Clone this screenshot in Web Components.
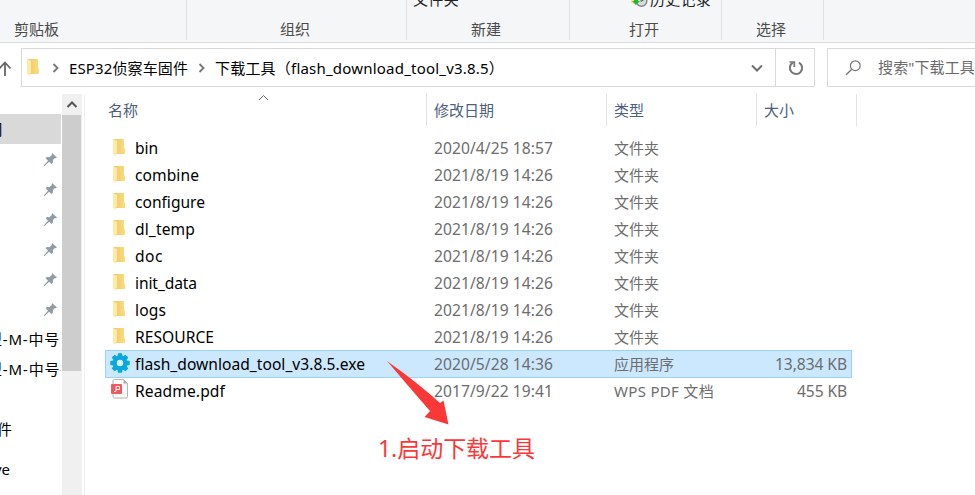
<!DOCTYPE html>
<html lang="zh-CN">
<head>
<meta charset="utf-8">
<title>下载工具</title>
<style>
html,body{margin:0;height:100%;overflow:hidden;background:#fff}
body{font-family:"Noto Sans","Noto Sans CJK SC",sans-serif;font-size:15px}
</style>
</head>
<body>
<explorer-window></explorer-window>
<script>
const el=(name,html,init)=>customElements.define(name,class extends HTMLElement{
  connectedCallback(){
    if(!this.shadowRoot)this.attachShadow({mode:'open'}).innerHTML=html;
    if(init)init(this,this.shadowRoot);
  }
});

/* Single-line label; "w" spreads the letters over that many pixels. */
el('fit-text',`<style>:host{display:inline-block;white-space:pre;flex:none;line-height:20px;height:20px}span{display:inline-block}</style><span></span>`,(h,r)=>{
  const s=r.querySelector('span');
  s.textContent=h.getAttribute('text');
  const w=+h.getAttribute('w');
  if(w){s.style.letterSpacing=(w-s.getBoundingClientRect().width)/[...s.textContent].length+'px'}
});

const icons={
folder:`<svg width="16" height="18" viewBox="0 0 16 18"><defs><linearGradient id="g"><stop offset="0" stop-color="#edc766"/><stop offset="1" stop-color="#fbdc7f"/></linearGradient></defs><path d="M1 0h11v9.500h1V15H1z" fill="url(#g)"/><path d="M1 0l4 2v12H4v2.700L1 15z" fill="#ffe9a6"/></svg>`,
gear:`<svg width="20" height="20" viewBox="-10 -10 20 20"><g fill="#06aade"><circle r="7.300"/><g id="t"><path d="M-2 -9.700h4l.7 4h-5.400z"/><path d="M-2 9.700h4l.7-4h-5.400z"/><path d="M-9.700 -2v4l4 .7v-5.400zM9.700 -2v4l-4 .7v-5.400z"/></g><use href="#t" transform="rotate(45)"/></g><circle r="3.200" fill="#e4f4ff"/></svg>`,
pdf:`<svg width="18" height="20" viewBox="0 0 18 20"><path d="M3.500.5h9L16.500 4.500v13a1.500 1.500 0 0 1-1.500 1.500H3.500A1.500 1.500 0 0 1 2 17.500V2A1.500 1.500 0 0 1 3.500.5z" fill="#fafafa" stroke="#b4b4b4"/><path d="M12.500.5v4h4z" fill="#aaa"/><rect y="5" width="11" height="10" rx="1" fill="#ed5b5e"/><path d="M3 12.500h2v-5h3.500v3H5" fill="none" stroke="#fff" stroke-width=".9"/></svg>`,
pin:`<svg width="13" height="13" viewBox="0 0 13 13"><path d="M8 0l5 4.500-1.500.8-1-.1L8.800 7.300l.3 2L7.600 11 5 8.800.6 13H0v-.8L4 7.800 1.500 5 3.200 4l2.200.2L7.600 2.300z" fill="#8f9ba5"/></svg>`,
sep:`<svg width="8" height="10" viewBox="0 0 8 10"><path d="M1.500 1l4 4-4 4" fill="none" stroke="#777" stroke-width="1.800"/></svg>`,
down:`<svg width="12" height="9" viewBox="0 0 12 9"><path d="M1 1.500l5 5 5-5" fill="none" stroke="#707070" stroke-width="2"/></svg>`,
scrollup:`<svg width="12" height="9" viewBox="0 0 12 9"><path d="M1.500 7l4.500-4.500L10.500 7" fill="none" stroke="#555" stroke-width="2"/></svg>`,
sort:`<svg width="11" height="7" viewBox="0 0 11 7"><path d="M1 6l4.500-4.500L10 6" fill="none" stroke="#666"/></svg>`,
up:`<svg width="12" height="16" viewBox="0 0 12 16"><path d="M5 15V1.500M-.5 7.500L5 1.500l5.500 6" fill="none" stroke="#666" stroke-width="1.800"/></svg>`,
refresh:`<svg width="16" height="16" viewBox="0 0 16 16"><path d="M11 2.600A6.100 6.100 0 1 1 4.800 2.700" fill="none" stroke="#757575" stroke-width="2"/><path d="M1.500 2h4.800v5" fill="none" stroke="#757575" stroke-width="1.700"/></svg>`,
search:`<svg width="17" height="16" viewBox="0 0 17 16"><circle cx="10.300" cy="5.700" r="4.900" fill="none" stroke="#777" stroke-width="1.200"/><path d="M6.700 9.300L1 15" stroke="#777" stroke-width="1.300"/></svg>`,
history:`<svg width="18" height="18" viewBox="0 0 18 18"><path d="M1 0h9v15L1 13z" fill="#ffe08a"/><circle cx="11.500" cy="11" r="5.300" fill="#d9dcd8" stroke="#85898a" stroke-width="1.500"/><path d="M11 8v3.500l3-2" fill="none" stroke="#555" stroke-width=".9"/><path d="M4 8h4v3h2l-4 4-4-4h2z" fill="#20b82c"/></svg>`,
arrow:`<svg width="64" height="66" viewBox="0 0 64 66"><path d="M1 1Q32 23 54 43L57.500 40.500 62.500 64.500 38.500 57 44 51Q23 27 1 1z" fill="#fb3838"/></svg>`
};
el('ui-icon',`<style>:host{display:flex;flex:none;align-items:center;justify-content:center}svg{display:block;flex:none}</style><div></div>`,(h,r)=>{r.querySelector('div').innerHTML=icons[h.getAttribute('name')]});

el('ribbon-group',`<style>:host{box-sizing:border-box;height:40px;flex:none;border-right:1px solid #dfe0e2;display:flex;flex-direction:column;justify-content:flex-end;align-items:center;color:#4b4b4b;position:relative}
.b{padding-bottom:1px}.c{position:absolute;top:-11px;left:0;color:#222}</style><div class="c"><slot></slot></div><div class="b"><slot name="label"></slot></div>`);

el('ribbon-bar',`<style>:host{display:flex;height:42px;background:#f5f6f8;border-bottom:1px solid #d9dadc;overflow:hidden;flex:none}
.cmd{display:flex;align-items:center}
.g1{width:187px;align-items:flex-start;padding-left:14px}
.g2{width:220px;padding-right:3px}.g3{width:163px;padding-right:4px}.g4{width:152px;padding-right:3px}
.g5{width:102px;padding-right:3px}</style>
<ribbon-group class="g1"><fit-text slot="label" text="剪贴板" w="45"></fit-text></ribbon-group>
<ribbon-group class="g2"><fit-text slot="label" text="组织" w="30"></fit-text></ribbon-group>
<ribbon-group class="g3"><fit-text style="margin-left:6px" text="文件夹" w="46"></fit-text><fit-text slot="label" text="新建" w="30"></fit-text></ribbon-group>
<ribbon-group class="g4"><div class="cmd" style="padding-left:60px"><ui-icon name="history"></ui-icon><fit-text style="margin-left:2px" text="历史记录" w="61"></fit-text></div><fit-text slot="label" text="打开" w="30"></fit-text></ribbon-group>
<ribbon-group class="g5"><fit-text slot="label" text="选择" w="30"></fit-text></ribbon-group>`);

el('address-bar',`<style>:host{display:flex;height:39px;padding-top:5px;margin-bottom:7px;flex:none;overflow:hidden}
.up{width:11px;margin-right:10px;height:41px}
.box{box-sizing:border-box;border:1px solid #d9d9d9;height:39px;display:flex;align-items:center;flex:none}
.path{width:794px;color:#000;padding-left:4px}
.down{margin-left:auto;margin-right:12px;margin-top:1px}.re{width:39px;height:37px;border-left:1px solid #d9d9d9;padding-left:1px;box-sizing:border-box}
.s{margin-left:12px;width:180px;padding-left:17px;color:#6b6b6b}
.s fit-text{margin:-1px 0 0 16px}
.sep1{margin:0 9px 0 10px}.sep2{margin:0 9px 0 10px}</style>
<ui-icon class="up" name="up"></ui-icon>
<div class="box path"><ui-icon name="folder"></ui-icon><ui-icon class="sep1" name="sep"></ui-icon><fit-text text="ESP32侦察车固件" w="119"></fit-text><ui-icon class="sep2" name="sep"></ui-icon><fit-text text="下载工具（flash_download_tool_v3.8.5）" w="289"></fit-text><ui-icon class="down" name="down"></ui-icon><ui-icon class="re" name="refresh"></ui-icon></div>
<div class="box s"><ui-icon name="search"></ui-icon><fit-text text='搜索"下载工具' w="97"></fit-text></div>`);

el('nav-tree',`<style>:host{display:block;width:62px;flex:none;overflow:hidden;padding-top:20px;box-sizing:border-box;color:#000}
.r{height:30px;display:flex;align-items:center;justify-content:flex-end;width:61px;overflow:hidden}
.sel{background:#d9d9d9;justify-content:flex-start}.pin{padding-right:4px;width:57px}.l{justify-content:flex-start}</style>
<div class="r sel"><fit-text style="margin-left:-12.500px" text="问"></fit-text></div>
${'<div class="r pin"><ui-icon name="pin"></ui-icon></div>'.repeat(6)}
<div class="r l"><fit-text style="margin-left:-13px" text="型-M-中号" w="73"></fit-text></div>
<div class="r l"><fit-text style="margin-left:-13px" text="型-M-中号-" w="79"></fit-text></div>
<div class="r"></div>
<div class="r l"><fit-text style="margin-left:-3px" text="件"></fit-text></div>
<div class="r l" style="height:50px"><fit-text style="margin-left:-6px" text="ve" w="16"></fit-text></div>`);

el('scroll-bar',`<style>:host{display:block;width:20px;background:#f0f0f0;flex:none;margin-right:2px}.u{height:21px}.t{height:256px;width:19px;background:#cdcdcd}</style><ui-icon class="u" name="scrollup"></ui-icon><div class="t"></div>`);

el('list-header',`<style>:host{display:flex;height:32px;color:#4c607a;position:relative}
div{box-sizing:border-box;border-right:1px solid #e2e2e2;display:flex;align-items:center;padding-left:7px;flex:none}
.sort{position:absolute;left:173px;top:0}</style>
<div style="width:342px;padding-left:23px"><fit-text text="名称" w="30"></fit-text></div><div style="width:180px"><fit-text text="修改日期" w="60"></fit-text></div><div style="width:150px"><fit-text text="类型" w="30"></fit-text></div><div style="width:100px"><fit-text text="大小" w="30"></fit-text></div><ui-icon class="sort" name="sort"></ui-icon>`);

el('file-row',`<style>:host{box-sizing:border-box;display:grid;grid-template-columns:28px 300px 180px 120px 113px;width:747px;height:27px;margin-left:20px;border:1px solid transparent;align-items:center;color:#6d6d6d}
:host([selected]){background:#cce8ff;border-color:#99d1ff;height:28px;margin-bottom:-1px}
.n{color:#000;margin-left:1px}.n,.d,.s{font-size:15.6px}ui-icon{margin-top:-3px}ui-icon[name=folder]{margin-top:0}.s{justify-self:end}</style>
<ui-icon></ui-icon><fit-text class="n"></fit-text><fit-text class="d"></fit-text><fit-text class="t"></fit-text><fit-text class="s"></fit-text>`,(h,r)=>{
  const [icon,n,nw,d,dw,t,tw,s,sw]=h.getAttribute('data').split('|');
  const i=document.createElement('ui-icon');i.setAttribute('name',icon);r.querySelector('ui-icon').replaceWith(i);
  for(const [c,x,w] of [['n',n,nw],['d',d,dw],['t',t,tw],['s',s,sw]]){
    const f=document.createElement('fit-text');f.className=c;f.setAttribute('text',x||'');if(w)f.setAttribute('w',w);
    r.querySelector('.'+c).replaceWith(f);
  }
});

const dir=(n,w,d='2021/8/19 14:26')=>`<file-row data="folder|${n}|${w}|${d}|119|文件夹|45"></file-row>`;
el('file-list',`<style>:host{display:block;flex:1;min-width:0;border-left:1px solid #f0f0f0;position:relative}
.rows{padding-top:8px}
.arrow{position:absolute;left:301px;top:266px}
.note{position:absolute;left:293px;top:344px;color:#fb3838;font-size:23px}</style>
<list-header></list-header><div class="rows">
${dir('bin',23,'2020/4/25 18:57')}${dir('combine',64)}${dir('configure',70)}${dir('dl_temp',60)}${dir('doc',28)}${dir('init_data',62)}${dir('logs',31)}${dir('RESOURCE',79)}
<file-row selected data="gear|flash_download_tool_v3.8.5.exe|230|2020/5/28 14:36|119|应用程序|60|13,834 KB|72"></file-row>
<file-row data="pdf|Readme.pdf|90|2017/9/22 19:41|119|WPS PDF 文档|100|455 KB|50"></file-row></div>
<ui-icon class="arrow" name="arrow"></ui-icon><fit-text class="note" text="1.启动下载工具" w="157"></fit-text>`);

el('explorer-window',`<style>:host{display:flex;flex-direction:column;width:975px;height:495px;overflow:hidden;background:#fff}.m{display:flex;flex:1;min-height:0}</style>
<ribbon-bar></ribbon-bar><address-bar></address-bar><div class="m"><nav-tree></nav-tree><scroll-bar></scroll-bar><file-list></file-list></div>`);
</script>
</body>
</html>
